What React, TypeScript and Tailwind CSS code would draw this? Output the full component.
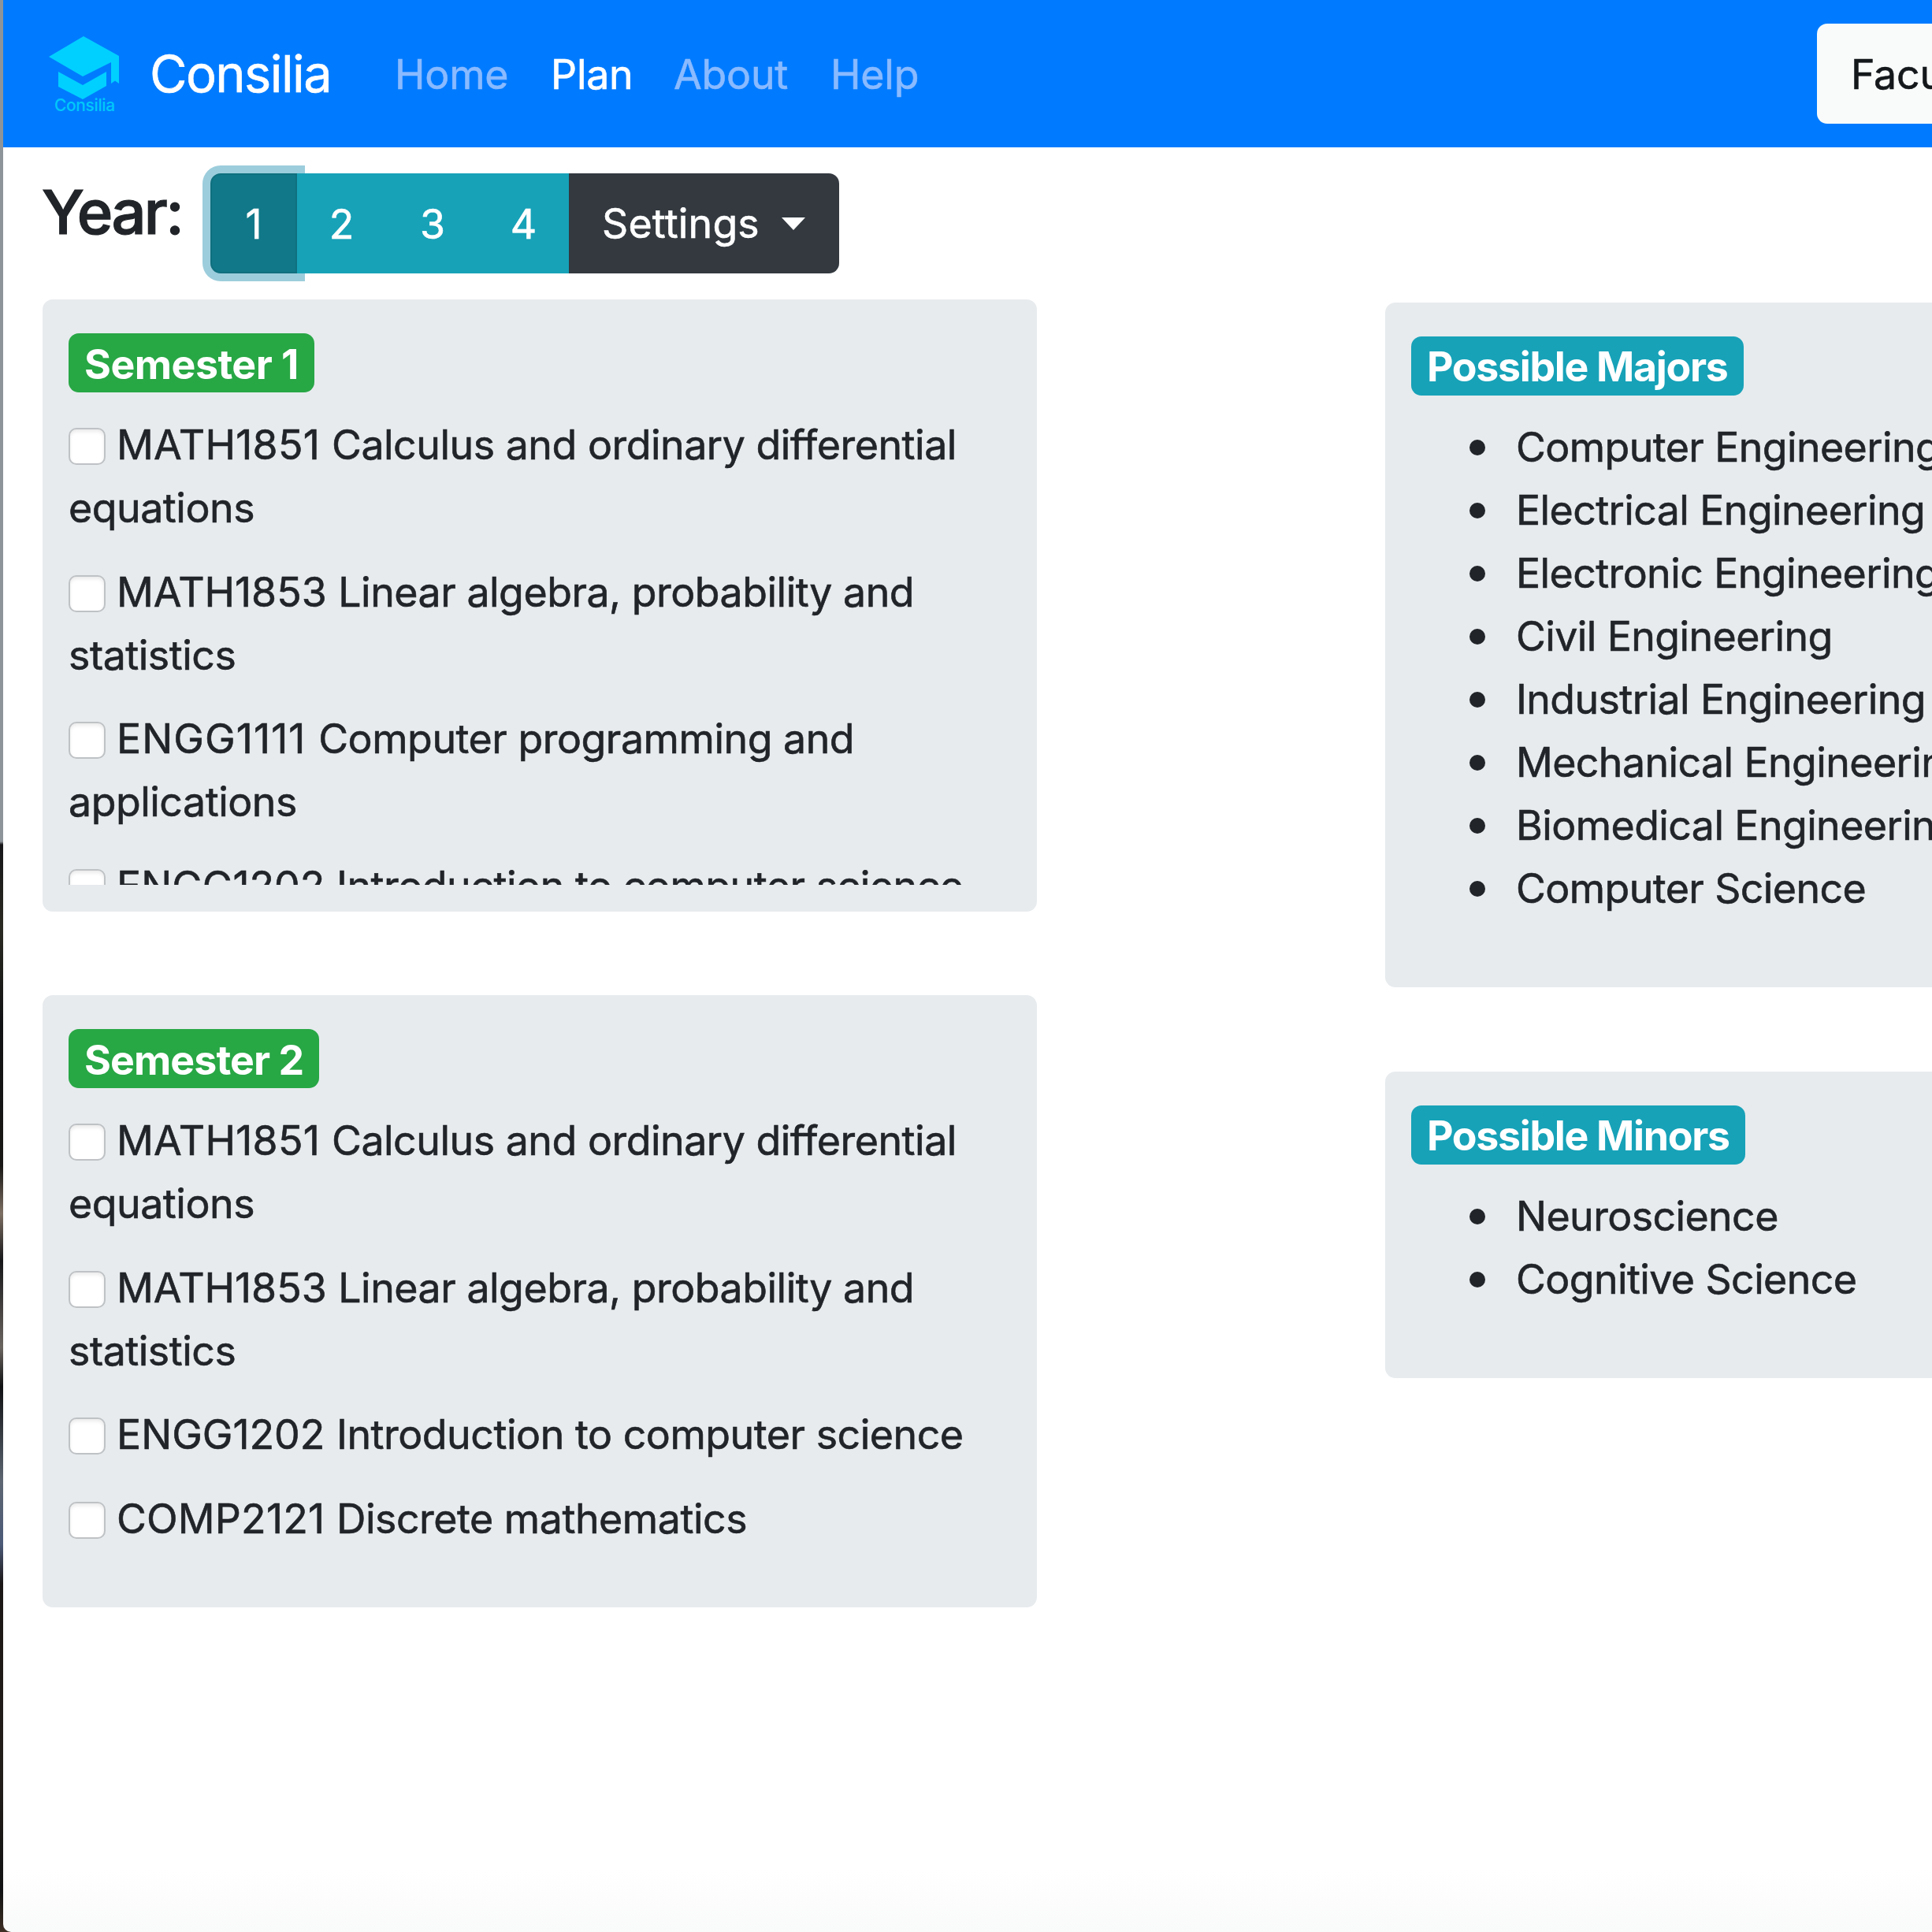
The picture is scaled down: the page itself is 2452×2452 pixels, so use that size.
import React from "react";

type Course = { code: string; name: string; spacing: string };

const CALCULUS: Course = { code: "MATH1851", name: "Calculus and ordinary differential equations", spacing: "tracking-[0.3px]" };
const ALGEBRA: Course = { code: "MATH1853", name: "Linear algebra, probability and statistics", spacing: "tracking-[0px]" };
const PROGRAMMING: Course = { code: "ENGG1111", name: "Computer programming and applications", spacing: "tracking-[1.1px]" };
const INTRO_CS: Course = { code: "ENGG1202", name: "Introduction to computer science", spacing: "tracking-[0px]" };
const DISCRETE: Course = { code: "COMP2121", name: "Discrete mathematics", spacing: "tracking-[0.2px]" };

const SEM1 = [CALCULUS, ALGEBRA, PROGRAMMING, INTRO_CS];
const SEM2 = [CALCULUS, ALGEBRA, INTRO_CS, DISCRETE];
const MAJORS = [
  "Computer Engineering",
  "Electrical Engineering",
  "Electronic Engineering",
  "Civil Engineering",
  "Industrial Engineering",
  "Mechanical Engineering",
  "Biomedical Engineering",
  "Computer Science",
];
const MINORS = ["Neuroscience", "Cognitive Science"];

function Logo() {
  return (
    <svg className="ml-[58px] mt-[46px] h-[100px] w-[92px] shrink-0 [-webkit-text-stroke:0px]" viewBox="0 0 92 100">
      <g fill="#00d0ff">
        <path d="M0 26 L44 0 L89 25 V60 L84 56.500 L79 60 V33 L43 51 Z" />
        <path d="M12 45 L43 62 L73 45 V63 L43 80 L12 64 Z" />
      </g>
      <text x="7" y="95" textLength="77" fontSize="21" fontWeight="500" fill="#00c8fa">
        Consilia
      </text>
    </svg>
  );
}

function SemesterCard({ title, courses, spacing }: { title: string; courses: Course[]; spacing: string }) {
  return (
    <section className="h-[777px] rounded-[13px] bg-[#e7ebee] px-[33px] pb-[33px] pt-[43px]">
      <div className="h-[700px] overflow-hidden">
        <h2 className={"block h-[75px] w-fit rounded-[13px] bg-[#28a745] px-[20px] font-bold leading-[78px] text-white [-webkit-text-stroke:0px] " + spacing}>
          {title}
        </h2>
        <ul className="mt-[26px] tracking-[-0.45px]">
          {courses.map((c) => (
            <li key={c.code} className="mb-[26.67px] leading-[80px]">
              <span className="mr-[14px] inline-block size-[47px] rounded-[10px] border-2 border-[#bfc2c5] bg-white align-[-7px] shadow-[inset_0_3px_4px_rgba(0,0,0,0.08)]" />
              <span className={c.spacing}>{c.code} </span>
              {c.name}
            </li>
          ))}
        </ul>
      </div>
    </section>
  );
}

function OptionCard({ title, items, className }: { title: string; items: string[]; className: string }) {
  return (
    <section className={"w-[1262px] rounded-[13px] bg-[#e7ebee] px-[33px] pt-[43px] " + className}>
      <h2 className="block h-[75px] w-fit rounded-[13px] bg-[#17a2b8] px-[20px] font-bold leading-[77px] tracking-[-1.3px] text-white [-webkit-text-stroke:0px]">
        {title}
      </h2>
      <ul className="mt-[26px] tracking-[-0.57px]">
        {items.map((m) => (
          <li key={m} className="flex h-[80px] items-center whitespace-nowrap pl-[74px]">
            <span className="mr-[39px] size-[20px] shrink-0 rounded-full bg-[#212529]" />
            {m}
          </li>
        ))}
      </ul>
    </section>
  );
}

export default function App() {
  return (
    <div className="flex h-[2452px] w-[2452px] overflow-hidden bg-[#3d2f24] font-['Inter',sans-serif] text-[51.8px] font-normal text-[#212529] [-webkit-text-stroke:0.6px]">
      <div className="w-[4px] shrink-0 bg-[linear-gradient(to_bottom,#8d949a_0px,#8d949a_1068px,#17171a_1072px,#2b2a22_1180px,#111214_1300px,#1a1816_1480px,#7d6f63_1540px,#17171a_1600px,#6b6560_1710px,#101113_1760px,#5d6672_1880px,#4c5a78_1960px,#1b1716_2010px,#241e1a_2250px,#121314_2400px,#3d2f24_2452px)]" />
      <div className="flex min-w-0 flex-1 flex-col overflow-hidden rounded-bl-[10px] bg-white bg-[linear-gradient(to_top,#f9fafa_0px,#fdfdfd_45px,#ffffff_80px)]">
        <nav className="flex h-[187px] shrink-0 bg-[#007bff] leading-[189px] tracking-[-0.2px] text-white">
          <Logo />
          <span className="ml-[36px] w-[311px] text-[65px] leading-[187px] tracking-[-1.6px]">Consilia</span>
          <span className="w-[198px] text-[#8abaff]">Home</span>
          <span className="w-[156px]">Plan</span>
          <span className="w-[199px] text-[#8abaff]">About</span>
          <span className="text-[#8abaff]">Help</span>
          <button className="ml-auto mt-[30px] h-[127px] w-[146px] shrink-0 overflow-hidden whitespace-nowrap rounded-l-[13px] bg-[#f9fbfb] pl-[43px] text-left leading-[129px] text-[#15181b]">
            Faculty
          </button>
        </nav>
        <div className="flex h-[193px] shrink-0 pl-[49px]">
          <h1 className="w-[214px] pt-[34px] text-[77.6px] font-medium leading-[96px] tracking-[-2.6px] [-webkit-text-stroke:1.2px]">
            Year:
          </h1>
          <div className="mt-[33px] flex h-[127px] leading-[129px] text-white">
            <button className="w-[110px] rounded-l-[13px] border-2 border-[#10707f] bg-[#107888] leading-[125px] shadow-[0_0_0_10px_#9ccddc]">1</button>
            <button className="relative w-[115px] bg-[#17a2b8] pr-[2px]">2</button>
            <button className="relative w-[115px] bg-[#17a2b8] pr-[1px]">3</button>
            <button className="relative w-[115px] bg-[#17a2b8]">4</button>
            <button className="flex w-[343px] items-center rounded-r-[13px] bg-[#33393f] pl-[42px] tracking-[0.2px]">
              Settings
              <span className="ml-[28px] border-x-[15px] border-t-[16px] border-x-transparent border-t-white" />
            </button>
          </div>
        </div>
        <div className="flex pl-[50px]">
          <div className="flex w-[1262px] shrink-0 flex-col gap-[106px]">
            <SemesterCard title="Semester 1" courses={SEM1} spacing="tracking-[-0.5px]" />
            <SemesterCard title="Semester 2" courses={SEM2} spacing="tracking-[-0.9px]" />
          </div>
          <div className="ml-[442px] flex shrink-0 flex-col gap-[107px] pt-[4px]">
            <OptionCard title="Possible Majors" items={MAJORS} className="h-[869px]" />
            <OptionCard title="Possible Minors" items={MINORS} className="h-[389px]" />
          </div>
        </div>
      </div>
    </div>
  );
}
